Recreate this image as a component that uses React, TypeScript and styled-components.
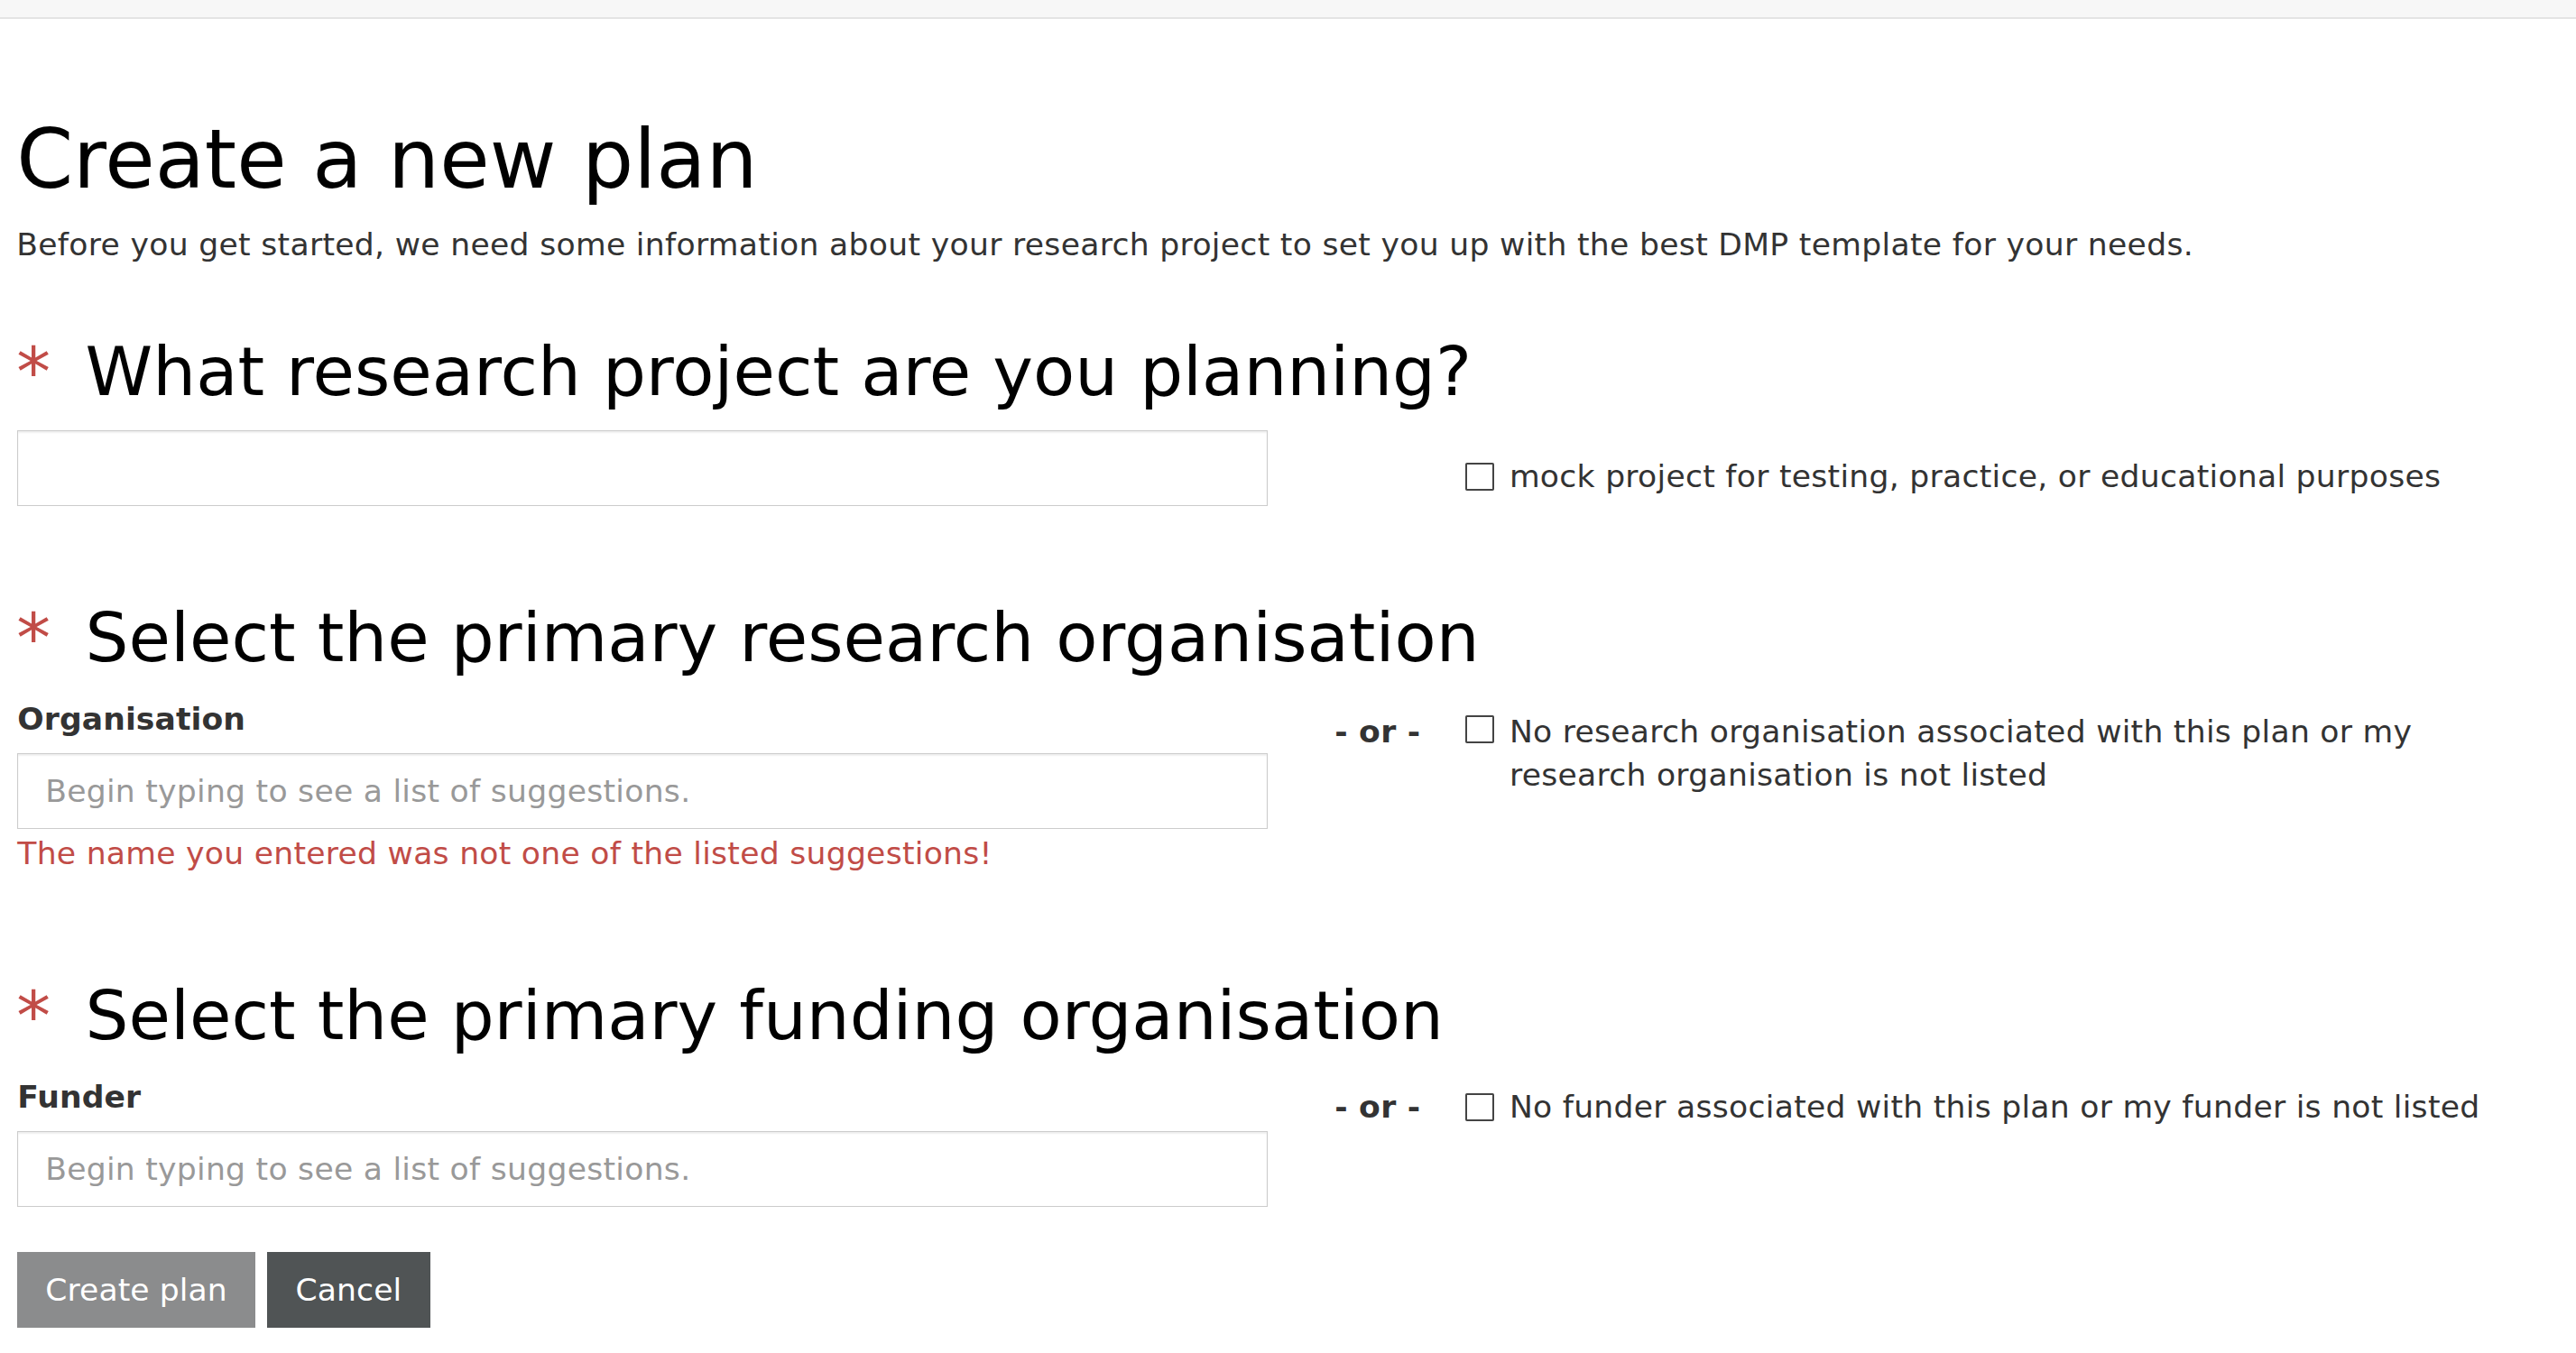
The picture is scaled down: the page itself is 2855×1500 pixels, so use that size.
import React from "react";
import styled, { createGlobalStyle } from "styled-components";

const GlobalStyle = createGlobalStyle`
  html, body {
    margin: 0;
    padding: 0;
    background: #fff;
  }
  body {
    font-family: "DejaVu Sans", Verdana, sans-serif;
    color: #333;
  }
`;

// the screenshot was taken at ~1.82x, so layout is written in 1x units
const Page = styled.div`
  zoom: 1.8208;
  min-height: 824px;
`;

const TopBar = styled.div`
  height: 10.4px;
  background: #f7f7f7;
  border-bottom: 1.1px solid #e4e4e4;
`;

const Main = styled.main`
  padding: 0 0 40px 10px;
`;

const Title = styled.h1`
  margin: 58px 0 0;
  font-size: 49.5px;
  font-weight: normal;
  line-height: 54.45px;
  color: #000;
`;

const Intro = styled.p`
  margin: 13.6px 0 0;
  font-size: 19px;
  letter-spacing: 0.17px;
  line-height: 24px;
`;

const Section = styled.section<{ $top: number }>`
  margin-top: ${(p) => p.$top}px;
`;

const Heading = styled.h2`
  margin: 0;
  font-size: 41.5px;
  font-weight: normal;
  line-height: 45.65px;
  color: #000;
`;

const Required = styled.span`
  color: #c14c47;
  margin-right: 8px;
`;

const Row = styled.div<{ $gap: number }>`
  display: grid;
  grid-template-columns: 761.4px 120.8px 640px;
  margin-top: ${(p) => p.$gap}px;
`;

const Field = styled.div`
  display: flex;
  flex-direction: column;
  margin-left: 0.6px;
`;

const FieldLabel = styled.label`
  font-size: 19px;
  font-weight: bold;
  letter-spacing: 0.05px;
  line-height: 20px;
  margin-bottom: 10.6px;
  color: #333;
`;

const TextInput = styled.input`
  box-sizing: border-box;
  width: 100%;
  height: 46.1px;
  padding: 0 16.4px;
  border: 0.8px solid #ccc;
  border-radius: 0;
  box-shadow: inset 0 1px 1px rgba(0, 0, 0, 0.075);
  font-family: "DejaVu Sans", Verdana, sans-serif;
  font-size: 19px;
  letter-spacing: 0.15px;
  color: #333;
  outline: none;

  &::placeholder {
    color: #999;
  }
`;

const ErrorText = styled.div`
  margin-top: 2px;
  font-size: 19px;
  letter-spacing: 0.15px;
  line-height: 26.6px;
  color: #c14c47;
`;

const OrCell = styled.div<{ $top: number }>`
  padding: ${(p) => p.$top}px 0 0 41px;
  font-size: 19px;
  font-weight: bold;
  letter-spacing: 0.15px;
  line-height: 26.6px;
  color: #333;
`;

const CheckCell = styled.label<{ $top: number }>`
  display: flex;
  align-items: flex-start;
  padding-top: ${(p) => p.$top}px;
  font-size: 19px;
  letter-spacing: 0.15px;
  line-height: 26.6px;
  color: #333;
`;

const Box = styled.input.attrs({ type: "checkbox" })<{ $nudge: number }>`
  appearance: none;
  flex: none;
  box-sizing: border-box;
  width: 17.1px;
  height: 17.1px;
  margin: ${(p) => p.$nudge}px 9.5px 0 0;
  border: 1.1px solid #444;
  border-radius: 1px;
  background: #fff;
`;

const Actions = styled.div`
  display: flex;
  gap: 7.2px;
  margin-top: 27.5px;
  margin-left: 0.4px;
`;

const Button = styled.button<{ $dark?: boolean }>`
  height: 46.1px;
  padding: 0 17.2px;
  border: none;
  border-radius: 0;
  background: ${(p) => (p.$dark ? "#505455" : "#8b8c8d")};
  color: #fff;
  font-family: "DejaVu Sans", Verdana, sans-serif;
  font-size: 19px;
  letter-spacing: 0.05px;
  cursor: pointer;
`;

export default function App() {
  return (
    <>
      <GlobalStyle />
      <Page>
        <TopBar />
        <Main>
          <Title>Create a new plan</Title>
          <Intro>
            Before you get started, we need some information about your research project to set you
            up with the best DMP template for your needs.
          </Intro>

          <Section $top={42.3}>
            <Heading>
              <Required>*</Required> What research project are you planning?
            </Heading>
            <Row $gap={12.6}>
              <Field>
                <TextInput type="text" aria-label="Project title" />
              </Field>
              <div />
              <CheckCell $top={14.6}>
                <Box $nudge={4.9} />
                <span>mock project for testing, practice, or educational purposes</span>
              </CheckCell>
            </Row>
          </Section>

          <Section $top={57.7}>
            <Heading>
              <Required>*</Required> Select the primary research organisation
            </Heading>
            <Row $gap={16.3}>
              <Field>
                <FieldLabel>Organisation</FieldLabel>
                <TextInput type="text" placeholder="Begin typing to see a list of suggestions." />
                <ErrorText>The name you entered was not one of the listed suggestions!</ErrorText>
              </Field>
              <OrCell $top={4.2}>- or -</OrCell>
              <CheckCell $top={4.2}>
                <Box $nudge={3.7} />
                <span>
                  No research organisation associated with this plan or my research organisation is
                  not listed
                </span>
              </CheckCell>
            </Row>
          </Section>

          <Section $top={62.6}>
            <Heading>
              <Required>*</Required> Select the primary funding organisation
            </Heading>
            <Row $gap={16.75}>
              <Field>
                <FieldLabel>Funder</FieldLabel>
                <TextInput type="text" placeholder="Begin typing to see a list of suggestions." />
              </Field>
              <OrCell $top={2.5}>- or -</OrCell>
              <CheckCell $top={2.5}>
                <Box $nudge={4.9} />
                <span>No funder associated with this plan or my funder is not listed</span>
              </CheckCell>
            </Row>
          </Section>

          <Actions>
            <Button type="button">Create plan</Button>
            <Button type="button" $dark>
              Cancel
            </Button>
          </Actions>
        </Main>
      </Page>
    </>
  );
}
